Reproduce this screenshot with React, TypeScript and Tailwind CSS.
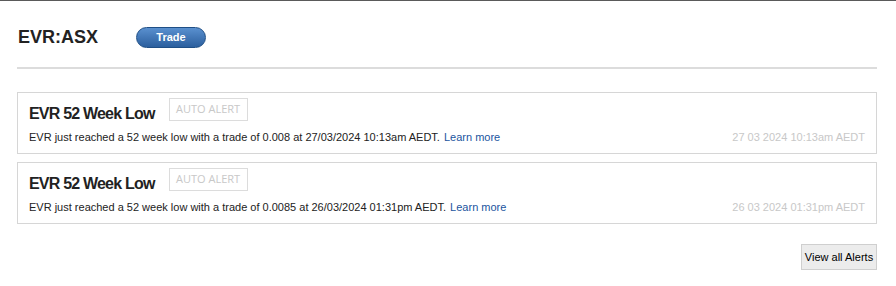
const alerts = [
    {
        title: 'EVR 52 Week Low',
        text: 'EVR just reached a 52 week low with a trade of 0.008 at 27/03/2024 10:13am AEDT.',
        date: '27 03 2024 10:13am AEDT',
    },
    {
        title: 'EVR 52 Week Low',
        text: 'EVR just reached a 52 week low with a trade of 0.0085 at 26/03/2024 01:31pm AEDT.',
        date: '26 03 2024 01:31pm AEDT',
    },
]

const App = () => {
    return (
        <div className="w-[896px] h-[286px] bg-white border-t border-[#5a5a5a] font-['Liberation_Sans',Arial,sans-serif] text-[#333]">
            <div className="pl-[17px] pr-[19px]">
                <div className="flex items-center h-[68px] pt-[6px] pl-[1px] border-b-2 border-[#dcdcdc]">
                    <h1 className="text-[18px] font-bold text-[#222] leading-none">EVR:ASX</h1>
                    <button className="ml-[38px] w-[70px] h-[21px] rounded-full border border-[#1f4f86] bg-gradient-to-b from-[#5a90cf] to-[#2b5f9e] text-white text-[11px] font-bold leading-none">
                        Trade
                    </button>
                </div>

                <div className="mt-[23px] flex flex-col gap-[8px]">
                    {alerts.map((a, i) => (
                        <div key={i} className="border border-[#d6d6d6] h-[62px] px-[11px] pt-[5px]">
                            <div className="flex items-end">
                                <span className="text-[16px] leading-[16px] tracking-[-0.8px] font-bold text-[#222] translate-y-[1px]">{a.title}</span>
                                <span className="ml-[14px] border border-[#dcdcdc] h-[23px] w-[79px] flex items-center justify-center text-[11px] text-[#c8c8c8] font-['Open_Sans',sans-serif]">
                                    AUTO ALERT
                                </span>
                            </div>
                            <div className="flex items-center justify-between mt-[10px] text-[11px] leading-[13px]">
                                <p className="text-[#222]">
                                    {a.text}{' '}
                                    <a className="ml-[1px] text-[#1b55a0]" href="#">Learn more</a>
                                </p>
                                <span className="text-[#c8c8c8]">{a.date}</span>
                            </div>
                        </div>
                    ))}
                </div>

                <div className="flex justify-end mt-[20px]">
                    <button className="w-[76px] h-[26px] bg-[#ececec] border border-[#cfcfcf] text-[11px] text-black">
                        View all Alerts
                    </button>
                </div>
            </div>
        </div>
    )
}

export default App
